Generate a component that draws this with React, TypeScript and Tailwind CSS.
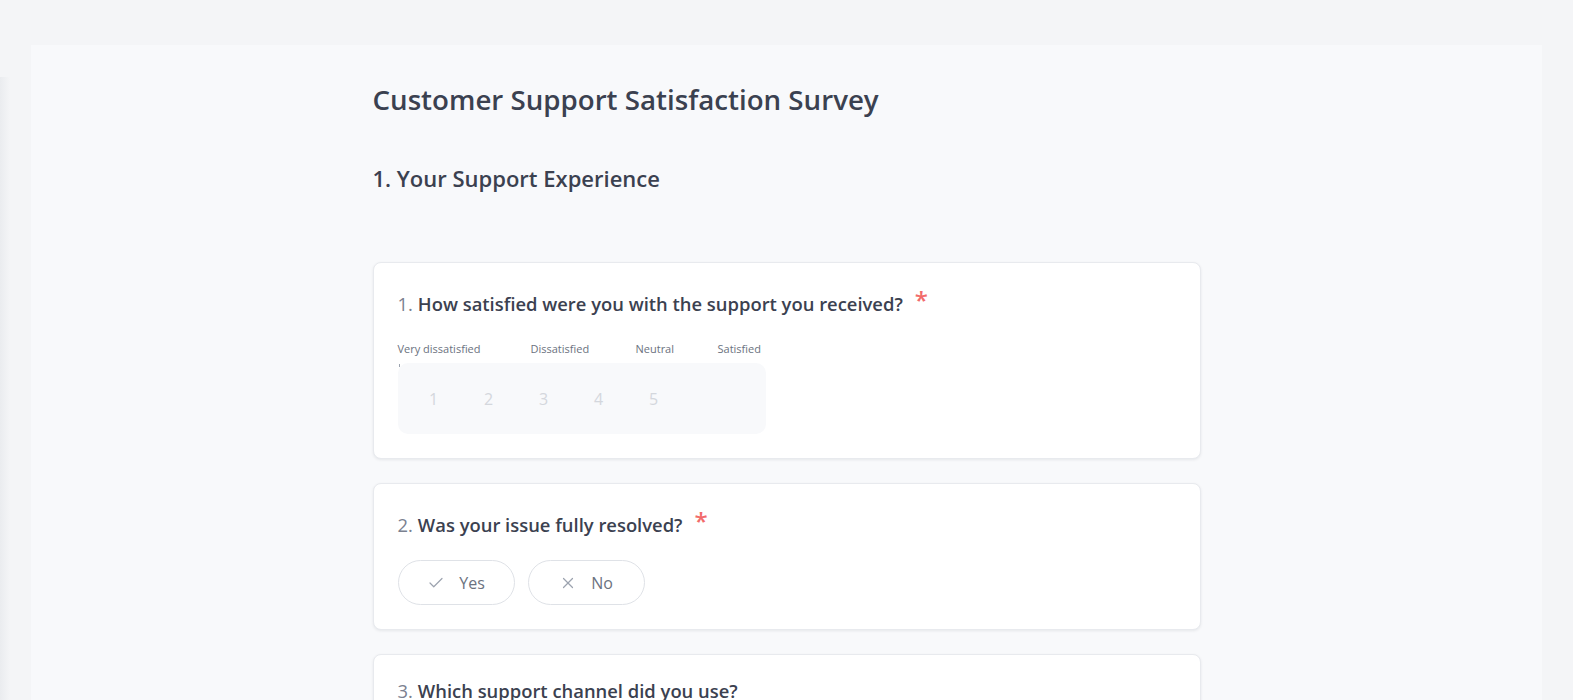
import React from 'react';
import { Check, X } from 'lucide-react';

const labels = [
  { text: 'Very dissatisfied', w: 'w-[133px]' },
  { text: 'Dissatisfied', w: 'w-[105px]' },
  { text: 'Neutral', w: 'w-[82px]' },
  { text: 'Satisfied', w: 'w-auto' },
];

const QuestionTitle: React.FC<{ n: number; text: string; required?: boolean }> = ({ n, text, required }) => (
  <h3 className="flex items-start text-[18.4px] leading-7 font-semibold text-[#3b4150]">
    <span className="text-[#7b8190] mr-[5px] font-medium">{n}.</span>
    <span>{text}</span>
    {required && <span className="ml-[12px] -mt-[4px] text-[24px] leading-7 font-semibold text-[#f26b6b]">*</span>}
  </h3>
);

const Card: React.FC<{ children: React.ReactNode; tight?: boolean }> = ({ children, tight }) => (
  <section
    className={`rounded-lg border border-[#e8eaee] bg-white px-6 pb-6 shadow-[0_1px_3px_rgba(16,24,40,0.08)] ${tight ? 'pt-[22px]' : 'pt-[27px]'}`}
  >
    {children}
  </section>
);

const App: React.FC = () => {
  return (
    <div
      className="flex h-[700px] overflow-hidden bg-[#f4f5f7]"
      style={{ fontFamily: '"Open Sans", "Noto Sans", sans-serif' }}
    >
      {/* left edge shadow */}
      <div className="mt-[77px] w-[10px] shrink-0 bg-linear-to-r from-[#eaecef] to-[#f4f5f7]" />

      <main className="flex-1 pt-[45px] pl-[21px] pr-[31px]">
        <div className="h-full bg-[#f8f9fb]">
          <div className="mx-auto w-[828px] pt-[34px]">
            <h1 className="text-[27.7px] leading-10 font-semibold text-[#3b4150]">
              Customer Support Satisfaction Survey
            </h1>
            <h2 className="mt-[43px] text-[22px] leading-8 font-semibold text-[#3b4150]">
              1. Your Support Experience
            </h2>

            <div className="mt-[68px] flex flex-col gap-[24px]">
              <Card>
                <QuestionTitle n={1} text="How satisfied were you with the support you received?" required />
                <div className="mt-[23px] flex text-[11px] leading-4 text-[#6b7280]">
                  {labels.map(l => (
                    <span key={l.text} className={`${l.w} shrink-0`}>{l.text}</span>
                  ))}
                </div>
                <div className="relative mt-[6px] flex h-[71px] w-[368px] items-center gap-[15px] rounded-[10px] bg-[#f8f9fb] pl-4">
                  <span className="absolute left-[1px] top-[1px] h-[3px] w-px bg-[#9ca3af]" />
                  {[1, 2, 3, 4, 5].map(n => (
                    <span key={n} className="w-10 text-center text-base text-[#d4d7dd]">{n}</span>
                  ))}
                </div>
              </Card>

              <Card>
                <QuestionTitle n={2} text="Was your issue fully resolved?" required />
                <div className="mt-[21px] flex gap-[13px]">
                  <button className="flex h-[45px] w-[117px] items-center justify-center gap-[14px] rounded-full border border-[#dfe2e7] bg-white text-base text-[#6b7280]">
                    <Check size={18} strokeWidth={1.6} className="text-[#9ca3af]" />
                    Yes
                  </button>
                  <button className="flex h-[45px] w-[117px] items-center justify-center gap-[14px] rounded-full border border-[#dfe2e7] bg-white text-base text-[#6b7280]">
                    <X size={18} strokeWidth={1.6} className="text-[#9ca3af]" />
                    No
                  </button>
                </div>
              </Card>

              <Card tight>
                <QuestionTitle n={3} text="Which support channel did you use?" />
                <div className="h-[200px]" />
              </Card>
            </div>
          </div>
        </div>
      </main>

      {/* scrollbar gutter */}
      <div className="w-[15px] shrink-0 bg-white" />
    </div>
  );
};

export default App;
